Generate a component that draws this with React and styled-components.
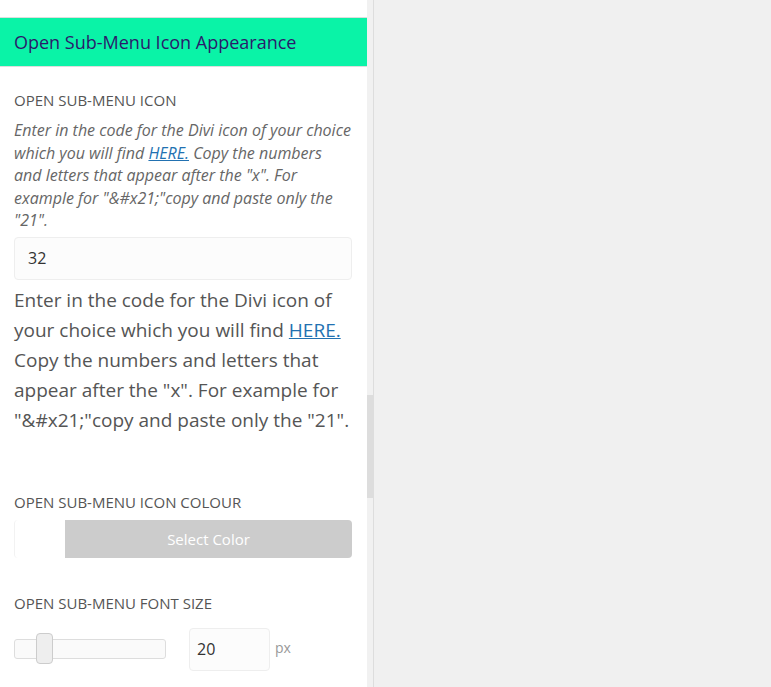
import React from "react";
import styled, { createGlobalStyle } from "styled-components";

const GlobalStyle = createGlobalStyle`
  html, body {
    margin: 0;
    padding: 0;
    background: #f0f0f0;
    font-family: "Open Sans", "Noto Sans", sans-serif;
  }
`;

const Page = styled.div`
  display: flex;
  height: 687px;
  overflow: hidden;
`;

const Panel = styled.div`
  width: 367px;
  background: #ffffff;
  padding-top: 17px;
  box-sizing: border-box;
`;

const ScrollTrack = styled.div`
  width: 6px;
  background: #f1f1f1;
  border-right: 1px solid #dddddd;
  display: flex;
  flex-direction: column;
`;

const ScrollThumb = styled.div`
  margin-top: ${(p) => p.offset}px;
  height: ${(p) => p.size}px;
  background: #dddddd;
`;

const Canvas = styled.div`
  flex: 1;
  background: #f0f0f0;
`;

const SectionHeader = styled.div`
  height: 48px;
  background: #0af3a7;
  border-top: 1px solid #dddddd;
  border-bottom: 1px solid #dddddd;
  display: flex;
  align-items: center;
  padding: 0 14px;
  color: #2a1a6b;
  font-size: 18px;
`;

const Body = styled.div`
  padding: 20px 15px 0 14px;
`;

const Field = styled.div`
  margin-bottom: ${(p) => p.gap || 0}px;
`;

const Label = styled.div`
  font-size: 15px;
  color: #555555;
  text-transform: uppercase;
  line-height: 26px;
  margin-bottom: ${(p) => p.space || 4}px;
`;

const Hint = styled.div`
  font-size: 16px;
  font-style: italic;
  color: #666666;
  line-height: 22.5px;
  margin-bottom: 5px;
`;

const Link = styled.a`
  color: #2271b1;
  text-decoration: underline;
`;

const TextInput = styled.div`
  height: 43px;
  box-sizing: border-box;
  border: 1px solid #eeeeee;
  border-radius: 4px;
  background: #fcfcfc;
  display: flex;
  align-items: center;
  padding: 0 ${(p) => p.pad || 13}px;
  font-size: 16px;
  color: #333333;
  width: ${(p) => p.width || "auto"};
`;

const Description = styled.div`
  font-size: 19px;
  color: #555555;
  line-height: 30px;
  margin-top: 5px;
`;

const ColorPicker = styled.div`
  display: flex;
  height: 38px;
`;

const Swatch = styled.div`
  width: 50px;
  border-left: 1px solid #f2f2f2;
  border-radius: 4px 0 0 4px;
  background: #ffffff;
`;

const SelectButton = styled.div`
  flex: 1;
  background: #cccccc;
  border-radius: 0 4px 4px 0;
  color: #ffffff;
  font-size: 15px;
  display: flex;
  align-items: center;
  justify-content: center;
`;

const SliderRow = styled.div`
  display: flex;
  align-items: center;
  margin-top: 12px;
`;

const Track = styled.div`
  position: relative;
  width: 152px;
  height: 20px;
  box-sizing: border-box;
  border: 1px solid #dddddd;
  border-radius: 3px;
  background: #fafafa;
  margin-right: 23px;
`;

const Handle = styled.div`
  position: absolute;
  left: ${(p) => p.pos}px;
  top: -7px;
  width: 17px;
  height: 31px;
  box-sizing: border-box;
  border: 1px solid #cccccc;
  border-radius: 4px;
  background: #eeeeee;
`;

const Unit = styled.span`
  font-size: 14px;
  color: #999999;
  margin-left: 5px;
  align-self: flex-start;
  margin-top: 10px;
`;

export default function App() {
  return (
    <Page>
      <GlobalStyle />
      <Panel>
        <SectionHeader>Open Sub-Menu Icon Appearance</SectionHeader>
        <Body>
          <Field gap={54}>
            <Label space={6}>Open Sub-Menu Icon</Label>
            <Hint>
              Enter in the code for the Divi icon of your choice which you will
              find <Link href="#">HERE.</Link> Copy the numbers and letters
              that appear after the "x". For example for "&amp;#x21;"copy and
              paste only the "21".
            </Hint>
            <TextInput>32</TextInput>
            <Description>
              Enter in the code for the Divi icon of your choice which you will
              find <Link href="#">HERE.</Link> Copy the numbers and letters that
              appear after the "x". For example for "&amp;#x21;"copy and paste
              only the "21".
            </Description>
          </Field>
          <Field gap={32}>
            <Label space={5}>Open Sub-Menu Icon Colour</Label>
            <ColorPicker>
              <Swatch />
              <SelectButton>Select Color</SelectButton>
            </ColorPicker>
          </Field>
          <Field>
            <Label>Open Sub-Menu Font Size</Label>
            <SliderRow>
              <Track>
                <Handle pos={21} />
              </Track>
              <TextInput width="81px" pad={7}>20</TextInput>
              <Unit>px</Unit>
            </SliderRow>
          </Field>
        </Body>
      </Panel>
      <ScrollTrack>
        <ScrollThumb offset={395} size={103} />
      </ScrollTrack>
      <Canvas />
    </Page>
  );
}
